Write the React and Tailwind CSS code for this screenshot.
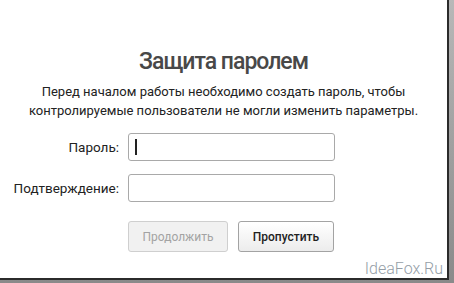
import React from 'react';

const font = { fontFamily: 'Roboto, "Liberation Sans", sans-serif' };

export default function App() {
  return (
    <div className="w-[454px] h-[283px] bg-[linear-gradient(to_bottom,#b8b8b8,#8a8a8a)]" style={font}>
      <div className="relative w-[449px] h-[280px] bg-white border-r-2 border-b-2 border-[#2b2b2b]">
        {/* Header */}
        <div className="pt-[47px] text-center">
          <h1 className="text-[23px] leading-[30px] font-medium tracking-[-1px] text-[#484848]">Защита паролем</h1>
          <p className="mt-[5px] text-[13px] leading-[19px] text-[#222]">
            Перед началом работы необходимо создать пароль, чтобы
            <br />
            контролируемые пользователи не могли изменить параметры.
          </p>
        </div>

        {/* Form */}
        <div className="mt-[13px] flex flex-col gap-[13px]">
          <div className="flex items-center">
            <label className="w-[120px] pr-[1px] text-right text-[13.5px] text-[#222]">Пароль:</label>
            <div className="ml-[8px] w-[207px] h-[28px] flex items-center rounded-[3px] border border-[#a9a9a9] bg-white">
              <span className="ml-[6px] w-[2px] h-[16px] bg-[#222]" />
            </div>
          </div>
          <div className="flex items-center">
            <label className="w-[120px] pr-[1px] text-right text-[13.5px] text-[#222]">Подтверждение:</label>
            <div className="ml-[8px] w-[207px] h-[28px] rounded-[3px] border border-[#a9a9a9] bg-white" />
          </div>
        </div>

        {/* Buttons */}
        <div className="mt-[19px] ml-[128px] flex gap-[10px]">
          <button
            disabled
            className="w-[100px] h-[31px] rounded-[3px] border border-[#cfcfcf] bg-[#f1f1f1] text-[12px] text-[#a3a3a3]"
          >
            Продолжить
          </button>
          <button className="w-[96px] h-[31px] rounded-[3px] border border-[#a3a3a3] bg-[linear-gradient(to_bottom,#ffffff,#ececec)] text-[12px] font-medium text-[#222]">
            Пропустить
          </button>
        </div>

        {/* Watermark */}
        <span className="absolute right-[4px] bottom-[1px] text-[16px] leading-none font-light text-[#959ea7]">IdeaFox.Ru</span>
      </div>
    </div>
  );
}
